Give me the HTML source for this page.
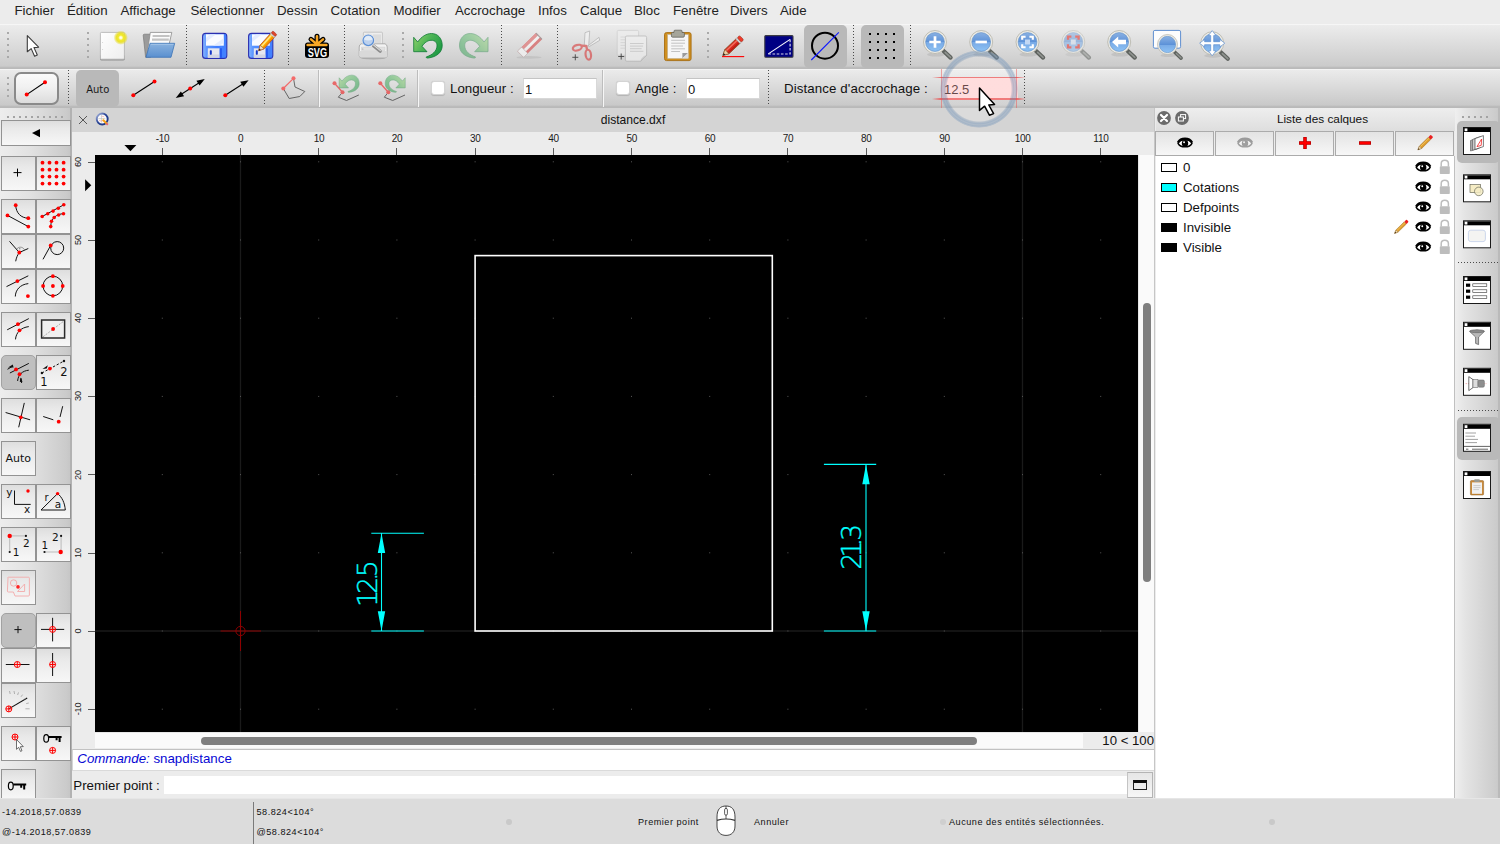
<!DOCTYPE html>
<html lang="fr"><head><meta charset="utf-8"><title>distance.dxf</title>
<style>
*{box-sizing:border-box;margin:0;padding:0}
html,body{width:1500px;height:844px;overflow:hidden;background:#ececec;font-family:"Liberation Sans",sans-serif;color:#000}
#app{position:absolute;left:0;top:0;width:1500px;height:844px;overflow:hidden}
.abs,#app div,#app span,#app svg{position:absolute}
svg{overflow:visible}
#menubar{left:0;top:0;width:1500px;height:24px;background:#ececec}
#menubar span{top:2px;font-size:13.3px;line-height:18px;color:#222;white-space:nowrap}
#tb1{left:0;top:24px;width:1500px;height:45px;background:linear-gradient(#f6f6f6 0,#f6f6f6 1px,#ececec 1px,#cbcbcb 42px,#bcbcbc 43.5px,#b9b9b9 45px)}
#tb2{left:0;top:69px;width:1500px;height:39px;background:linear-gradient(#f4f4f4 0,#f4f4f4 1px,#ebebeb 1px,#c9c9c9 36px,#bbbbbb 37.5px,#b8b8b8 39px)}
.vdots{width:2px;background:repeating-linear-gradient(#a9a9a9 0 2px,transparent 2px 6px)}
.hdots{height:2px;background:repeating-linear-gradient(90deg,#a3a3a3 0 2px,transparent 2px 6px)}
.dsep{width:1px;background:repeating-linear-gradient(#4a4a4a 0 1px,transparent 1px 3px)}
.hsep{height:1px;background:repeating-linear-gradient(90deg,#4a4a4a 0 1px,transparent 1px 3px)}
.ssep{width:2px;background:linear-gradient(90deg,#bdbdbd 0 1px,#f6f6f6 1px 2px)}
.pressed{background:#b9b9b9;border-radius:5px}
.lbl{font-size:13.3px;line-height:16px;white-space:nowrap;color:#111}
.cb{width:13.5px;height:13.5px;background:#fff;border:1px solid #d4d4d4;border-radius:3px;box-shadow:0 0.5px 1px rgba(0,0,0,.15)}
.inp{background:#fff;border:1px solid #d8d8d8;border-top-color:#c4c4c4;font-size:13px;line-height:20.5px;padding-left:.5px;color:#111}
#lefttb{left:0;top:108px;width:72px;height:690px;background:linear-gradient(90deg,#ededed 0,#e2e2e2 30px,#cbcbcb 66px,#c6c6c6 70.5px,#b2b2b2 70.5px,#b2b2b2 72px)}
.tbtn{width:35px;height:35px;border:1px solid #939393;background:linear-gradient(#dedede 0,#e9e9e9 30%,#f7f7f7 100%)}
.tbtn.on{background:#bfbfbf;border-radius:5px;border-color:#a2a2a2}
.dj{font-family:"DejaVu Sans",sans-serif}
#tabbar{left:72px;top:108px;width:1083px;height:24px;background:#d4d4d4}
#rulerarea{left:72px;top:132px;width:1083px;height:616px;background:#ececec}
#canvas{left:95px;top:155px;width:1043px;height:577px;background:#000;overflow:hidden}
.rl{font-size:10px;letter-spacing:-.3px;line-height:10px;color:#1a1a1a;white-space:nowrap;text-align:center;width:30px}
#rightpanel{left:1155px;top:108px;width:300px;height:690px;background:#ececec}
#righttb{left:1455px;top:108px;width:45px;height:690px;background:linear-gradient(90deg,#efefef 0,#e4e4e4 10px,#cbcbcb 42px,#c9c9c9 43px,#bababa 43px,#bababa 45px)}
#status{left:0;top:798px;width:1500px;height:46px;background:#dcdcdc}
#status span{font-size:9.1px;letter-spacing:.52px;line-height:12px;color:#111;white-space:nowrap}
.lrow{font-size:13.3px;line-height:16px;color:#111;white-space:nowrap}
.pbtn{width:59px;height:25px;top:23px;border:1px solid #ababab;background:linear-gradient(#e3e3e3,#f7f7f7)}
</style></head><body>
<div id="app">
<div id="menubar">
<span style="left:14.5px">Fichier</span><span style="left:67px">Édition</span><span style="left:120.5px">Affichage</span><span style="left:190.5px">Sélectionner</span><span style="left:277px">Dessin</span><span style="left:330.5px">Cotation</span><span style="left:393.5px">Modifier</span><span style="left:455px">Accrochage</span><span style="left:538px">Infos</span><span style="left:580px">Calque</span><span style="left:634px">Bloc</span><span style="left:673px">Fenêtre</span><span style="left:730px">Divers</span><span style="left:780px">Aide</span>
</div>
<div id="tb1">
<!-- coordinates inside tb1: y = pageY-24 -->
<div class="vdots" style="left:7px;top:8px;height:26px"></div>
<div class="vdots" style="left:87px;top:8px;height:26px"></div>
<div class="vdots" style="left:402px;top:8px;height:26px"></div>
<div class="vdots" style="left:707px;top:8px;height:26px"></div>
<div class="dsep" style="left:186px;top:1px;height:41px"></div>
<div class="dsep" style="left:288px;top:1px;height:41px"></div>
<div class="dsep" style="left:344px;top:1px;height:41px"></div>
<div class="dsep" style="left:501px;top:1px;height:41px"></div>
<div class="dsep" style="left:557px;top:1px;height:41px"></div>
<div class="dsep" style="left:853px;top:1px;height:41px"></div>
<div class="dsep" style="left:910px;top:1px;height:41px"></div>
<div class="pressed" style="left:804px;top:1px;width:43px;height:43px"></div>
<div class="pressed" style="left:861px;top:1px;width:43px;height:43px"></div>
<svg id="tb1svg" style="left:0;top:0" width="1500" height="45" viewBox="0 24 1500 45">
<defs>
<linearGradient id="gBlue" x1="0" y1="0" x2="0" y2="1"><stop offset="0" stop-color="#8ab1e3"/><stop offset=".5" stop-color="#5d92d8"/><stop offset=".52" stop-color="#78aae6"/><stop offset="1" stop-color="#8ec2f4"/></linearGradient>
<linearGradient id="gPage" x1="0" y1="0" x2="1" y2="1"><stop offset="0" stop-color="#fff"/><stop offset="1" stop-color="#eeeeee"/></linearGradient>
<linearGradient id="gFold" x1="0" y1="0" x2="0" y2="1"><stop offset="0" stop-color="#8ab3df"/><stop offset="1" stop-color="#5a8fcf"/></linearGradient>
<linearGradient id="gFlop" x1="0" y1="0" x2="1" y2="0"><stop offset="0" stop-color="#8ab8ff"/><stop offset=".18" stop-color="#5b95ff"/><stop offset=".6" stop-color="#3f7cff"/><stop offset="1" stop-color="#4f8cff"/></linearGradient>
<linearGradient id="gGreen" x1="0" y1="0" x2="1" y2=".6"><stop offset="0" stop-color="#96d46c"/><stop offset=".5" stop-color="#4cb456"/><stop offset="1" stop-color="#1f9a44"/></linearGradient>
<radialGradient id="gGlow"><stop offset="0" stop-color="#ffffff"/><stop offset=".16" stop-color="#fffbd0"/><stop offset=".36" stop-color="#f2ea2c"/><stop offset=".62" stop-color="#ebe126" stop-opacity=".95"/><stop offset=".85" stop-color="#e6dc30" stop-opacity=".45"/><stop offset="1" stop-color="#e6dc30" stop-opacity="0"/></radialGradient>
<g id="mag">
<ellipse cx="1" cy="12.5" rx="9" ry="2" fill="#777" opacity=".18"/>
<path d="M7.5 8 L15.6 15.6" stroke="#5f635f" stroke-width="4.2" stroke-linecap="round"/>
<path d="M10.2 10.4 L15.6 15.4" stroke="#8f938f" stroke-width="1.6" stroke-linecap="round"/>
<circle r="11.5" fill="#ecebe5" stroke="#b4b2a8" stroke-width=".8"/>
<circle r="9.4" fill="url(#gBlue)" stroke="#5f8fc6" stroke-width=".6"/>
</g>
</defs>
<!-- arrow cursor -->
<path d="M27.3 35.6 L27.3 51.8 L31.2 48.6 L34.6 56.2 L37.3 55 L34 47.6 L38.6 47.2 Z" fill="#fff" stroke="#3c3c3c" stroke-width="1.1" stroke-linejoin="round"/>
<!-- new doc -->
<rect x="100" y="55" width="24.8" height="5.5" rx="1.4" fill="#868686" opacity=".85"/>
<rect x="100.4" y="32.4" width="24" height="26.8" rx="1" fill="url(#gPage)" stroke="#b0b0b0" stroke-width=".8"/>
<circle cx="102.6" cy="42.4" r=".5" fill="#ccc"/><circle cx="102.6" cy="49.6" r=".5" fill="#ccc"/>
<circle cx="120.8" cy="37.7" r="7.2" fill="url(#gGlow)"/>
<!-- open folder -->
<path d="M143.2 35.4 Q143.2 34.2 144.4 34.2 L150.5 34.2 L150.5 57.3 L145.6 57.3 Z" fill="#9b9b9b" stroke="#6f6f6f" stroke-width=".6"/>
<path d="M150.3 32.4 L171.8 32.4 L169.2 44 L146.8 56 Z" fill="#fbfbfb" stroke="#8a8a8a" stroke-width=".8" stroke-linejoin="round"/>
<path d="M152.6 36 L169.6 36 M152 39.6 L168.8 39.6" stroke="#c3c3c3" stroke-width="2.2"/>
<path d="M150 43.3 L174.7 43.3 L171 57.3 L146 57.3 Z" fill="url(#gFold)" stroke="#3b74b8" stroke-width=".8" stroke-linejoin="round"/>
<path d="M150.8 44.4 L173.4 44.4" stroke="#a9c8ea" stroke-width=".8"/>
<!-- save -->
<g id="flop"><rect x="202.6" y="33.4" width="24.2" height="25" rx="3" fill="url(#gFlop)" stroke="#2a2fb0" stroke-width="1.1"/>
<rect x="222.2" y="34" width="4" height="23.8" fill="#3d7dff" opacity=".6"/>
<path d="M206 34.3 H223.8 V45.7 H206 Z" fill="#fafbff"/><path d="M210 34.3 H216 L206 42 V38 Z M223.8 38 V43 L219 45.7 H213 Z" fill="#dfe8ff" opacity=".8"/>
<rect x="207.8" y="48.3" width="11.9" height="9.4" fill="#e6e7f0"/><rect x="207.8" y="54.5" width="11.9" height="3.2" fill="#d2d4e2"/><rect x="219.7" y="48.3" width="2.2" height="9.4" fill="#2559f0"/><rect x="209.8" y="50.3" width="2" height="4.4" rx=".6" fill="#1536c8"/></g>
<!-- save as -->
<use href="#flop" x="46"/>
<g transform="translate(258.7 50.7) rotate(-47.9)"><path d="M0 0 L5 -2.7 L21 -2.7 L21 2.7 L5 2.7 Z" fill="#ffb000" stroke="#b0401a" stroke-width=".7" stroke-linejoin="round"/><path d="M5 -0.9 H21" stroke="#ffe88a" stroke-width="1.5"/><path d="M5 1.6 H21" stroke="#f08a00" stroke-width="1.2"/><path d="M0 0 L5 -2.7 L5 2.7 Z" fill="#f3dcb8" stroke="#8a4a2a" stroke-width=".5"/><path d="M0 0 L2 -1.1 L2 1.1 Z" fill="#222"/><rect x="20" y="-2.8" width="1.6" height="5.6" fill="#d8d8d8" stroke="#999" stroke-width=".3"/><rect x="21.6" y="-2.8" width="2.6" height="5.6" rx="1.1" fill="#e0442a" stroke="#a02a14" stroke-width=".5"/></g>
<!-- SVG icon -->
<g stroke="#000" stroke-width="5" stroke-linecap="round"><path d="M317 44.4 V36.2 M317 44.4 L311 39.4 M317 44.4 L323 39.4 M307.6 45 H326.4"/></g>
<rect x="305" y="43.6" width="24" height="14.4" rx="3" fill="#000"/>
<g stroke="#f9a825" stroke-width="2.5" stroke-linecap="round"><path d="M317 44.4 V36.2 M317 44.4 L311 39.4 M317 44.4 L323 39.4 M307.6 45 H326.4"/></g>
<circle cx="317" cy="43.6" r="2.2" fill="#f9a825"/>
<text x="317.4" y="57" font-family="Liberation Sans,sans-serif" font-weight="bold" font-size="12.8" fill="#fff" text-anchor="middle" textLength="19.4" lengthAdjust="spacingAndGlyphs">SVG</text>
<!-- print preview -->
<ellipse cx="373.2" cy="57.8" rx="13" ry="1.6" fill="#8a8a8a" opacity=".5"/>
<rect x="363.4" y="32.2" width="19" height="14" rx=".8" fill="#eeeeee" stroke="#bdbdbd" stroke-width=".8"/>
<rect x="373" y="34.4" width="8" height="8.6" fill="#dcdcdc"/>
<path d="M361.2 43.8 L385 43.8 Q387.2 44.6 387.2 47 L387.2 55.6 Q387.2 57.6 385.2 57.6 L361.2 57.6 Q359.2 57.6 359.2 55.6 L359.2 47 Q359.2 44.6 361.2 43.8 Z" fill="#f3f3f3" stroke="#a6a6a6" stroke-width=".9"/>
<path d="M359.2 51 H387.2 V55.6 Q387.2 57.6 385.2 57.6 H361.2 Q359.2 57.6 359.2 55.6 Z" fill="#d9d9d9"/>
<path d="M361.5 47.2 H385 V50.4 H361.5 Z" fill="#e2e2e2" stroke="#c9c9c9" stroke-width=".5"/>
<circle cx="362.8" cy="49" r=".5" fill="#888"/>
<path d="M373.2 45.4 L380.2 51.2" stroke="#8c8c8c" stroke-width="3.2" stroke-linecap="round"/><path d="M373.6 45 L380.4 50.6" stroke="#dcdcdc" stroke-width="1.1" stroke-linecap="round"/>
<circle cx="368.3" cy="40.3" r="6.5" fill="#f2f2f2" stroke="#d6d6d6" stroke-width=".5"/>
<circle cx="368.3" cy="40.3" r="5.3" fill="#bcd1ee" stroke="#5b8fd6" stroke-width="1.2"/><path d="M364 39.4 A4.4 4.4 0 0 1 372.6 39.4 Q368.3 41.4 364 39.4 Z" fill="#e2ecf8"/>
<!-- undo -->
<path id="undo" d="M413.7 37.3 L413.7 51.7 L427 51.7 L422 46.3 C424.5 42.5 428 40.3 431 40.3 C435 40.3 437.2 42.5 437 46 C436.8 51 432.5 55 426.3 56.9 C426 57.6 426.6 58.2 428 58 C437 57 442.5 52 442.2 45 C442 38 437.5 33.5 431.5 33.5 C426.5 33.5 421.5 36.5 417.7 42 Z" fill="url(#gGreen)" stroke="#0f7a35" stroke-width=".8" stroke-linejoin="round"/>
<!-- redo (faded) -->
<g transform="translate(901.7 0) scale(-1 1)" opacity=".45"><use href="#undo"/></g>
<!-- eraser faded -->
<g opacity=".62"><ellipse cx="529" cy="57.4" rx="12.5" ry="1.3" fill="#aaa" opacity=".6"/><g transform="translate(520.5 54.3) rotate(-44.4)"><rect x="0" y="-4.4" width="26.3" height="8.8" rx="1" fill="#d64a4a"/><rect x="0" y="-4.4" width="26.3" height="3.2" fill="#e06868"/><rect x="5.8" y="-1.3" width="20.5" height="2.9" fill="#fafafa"/><rect x="0" y="-4.4" width="5.8" height="8.8" rx=".8" fill="#fbfbfb" stroke="#9a9a9a" stroke-width=".5"/><rect x="25.3" y="-4.4" width="1" height="8.8" fill="#777"/></g></g>
<!-- scissors faded -->
<g opacity=".6"><path d="M585 32.7 L589.7 31 L588.7 46 L584.3 45.3 Z" fill="#f6f6f6" stroke="#8f8f8f" stroke-width=".7" stroke-linejoin="round"/><path d="M588.3 45.6 L599 37.3 L599.7 40.3 L589.3 46.5 Z" fill="#f6f6f6" stroke="#8f8f8f" stroke-width=".7" stroke-linejoin="round"/>
<ellipse cx="577.3" cy="47.7" rx="4.6" ry="2.7" fill="none" stroke="#d83a3a" stroke-width="2.2" transform="rotate(-17 577.3 47.7)"/><ellipse cx="588.3" cy="54.7" rx="2.7" ry="5" fill="none" stroke="#d83a3a" stroke-width="2.2" transform="rotate(-8 588.3 54.7)"/><path d="M581.6 45.6 L586.2 46 L587.2 50" fill="none" stroke="#d83a3a" stroke-width="2.4" stroke-linejoin="round"/>
</g><path d="M572.3 57.3 H578.3 M575.3 54.3 V60.3" stroke="#444" stroke-width=".9"/>
<!-- copy faded -->
<g opacity=".62"><path d="M617.2 31.6 Q617.2 30.4 618.4 30.4 H637.4 Q638.6 30.4 638.6 31.6 V55.2 H617.2 Z" fill="#efefef" stroke="#bdbdbd" stroke-width=".7"/>
<path d="M620.5 37 H626 M620.5 39.8 H625 M620.5 42.6 H625 M620.5 45.4 H625 M620.5 48.2 H625" stroke="#cdcdcd" stroke-width=".9"/>
<path d="M625.4 37.4 Q625.4 36 626.8 36 H645.2 Q646.6 36 646.6 37.4 V55.4 L640.8 61.2 H626.8 Q625.4 61.2 625.4 59.8 Z" fill="#f3f3f3" stroke="#a2a2a2" stroke-width=".8"/><path d="M640.8 61.2 Q641.6 57 646.6 55.4 Z" fill="#d2d2d2" stroke="#a2a2a2" stroke-width=".5"/>
<path d="M630 43.5 H643.6 M630 46.1 H643 M630 48.7 H641.6 M630 51.3 H643.4" stroke="#bdbdbd" stroke-width=".9"/></g>
<path d="M618.2 56.5 H624.2 M621.2 53.5 V59.5" stroke="#444" stroke-width=".9"/>
<!-- paste -->
<rect x="664.5" y="32.6" width="26.6" height="28" rx="2" fill="#cf8f1f" stroke="#a76d12" stroke-width=".9"/>
<rect x="667.7" y="34.6" width="20.6" height="23.8" fill="#f6f6f6" stroke="#b9b9b9" stroke-width=".4"/>
<path d="M671.4 33.4 Q671.4 32.4 672.6 32.4 H674 V31 Q674 30.2 675 30.2 H681 Q682 30.2 682 31 V32.4 H683.2 Q684.4 32.4 684.4 33.4 V36 Q684.4 37.2 683.2 37.2 H672.6 Q671.4 37.2 671.4 36 Z" fill="#a5a59a" stroke="#5c5c56" stroke-width=".7"/>
<path d="M671.2 40.3 H685 M671.2 43.2 H685 M671.2 46 H683 M671.2 48.8 H685 M671.2 51.5 H680" stroke="#bcbcbc" stroke-width=".9"/>
<path d="M682.4 58.3 V53 H688.2 Z" fill="#9b9b9b"/><path d="M682.4 58.3 L688.2 53 V58.3 Z" fill="#dedede"/>
<!-- red pencil -->
<path d="M722 56.6 H744.2" stroke="#f00" stroke-width="1.1"/>
<g transform="translate(722.9 55.4) rotate(-43.4) scale(.93)"><path d="M0 0 L6 -3.2 L22.5 -3.2 L22.5 3.2 L6 3.2 Z" fill="#d8281e" stroke="#7a4a20" stroke-width=".7" stroke-linejoin="round"/><path d="M6 -1.2 H22.5" stroke="#f2705e" stroke-width="1.5"/><path d="M6 1.9 H22.5" stroke="#b81c14" stroke-width="1.2"/><path d="M0 0 L6 -3.2 L6 3.2 Z" fill="#ecd0a4" stroke="#7a4a20" stroke-width=".6" stroke-linejoin="round"/><path d="M0 0 L2.3 -1.25 L2.3 1.25 Z" fill="#1a1a1a"/><rect x="22" y="-3.3" width="2.2" height="6.6" fill="#d9d9d9" stroke="#8a8a8a" stroke-width=".4"/><rect x="24.2" y="-3.3" width="3.6" height="6.6" rx="1.5" fill="#ee3a2a" stroke="#8a2a18" stroke-width=".5"/></g>
<!-- navy draft icon -->
<rect x="764.8" y="35.6" width="28.2" height="21.6" rx="1" fill="#000083" stroke="#3c3c44" stroke-width="1.1"/>
<path d="M768.3 53.9 L790.1 39.4" stroke="#fff" stroke-width="1.1"/><path d="M768.3 54 H790.1 V39.4" fill="none" stroke="#d6d6ea" stroke-width="1.2" stroke-dasharray="2.6 1.6"/>
<!-- circle with line -->
<circle cx="825" cy="45.7" r="13" fill="none" stroke="#000" stroke-width="2"/>
<path d="M811.3 60 L838.8 32.4" stroke="#0a14ff" stroke-width="1.1"/>
<!-- grid -->
<g fill="#000"><rect x="869" y="33" width="2" height="2"/><rect x="877" y="33" width="2" height="2"/><rect x="885" y="33" width="2" height="2"/><rect x="893" y="33" width="2" height="2"/>
<rect x="869" y="41" width="2" height="2"/><rect x="877" y="41" width="2" height="2"/><rect x="885" y="41" width="2" height="2"/><rect x="893" y="41" width="2" height="2"/>
<rect x="869" y="49" width="2" height="2"/><rect x="877" y="49" width="2" height="2"/><rect x="885" y="49" width="2" height="2"/><rect x="893" y="49" width="2" height="2"/>
<rect x="869" y="57" width="2" height="2"/><rect x="877" y="57" width="2" height="2"/><rect x="885" y="57" width="2" height="2"/><rect x="893" y="57" width="2" height="2"/></g>
<!-- magnifiers -->
<use href="#mag" x="935" y="42"/><path d="M929.3 42 H940.7 M935 36.3 V47.7" stroke="#fff" stroke-width="2.7"/>
<use href="#mag" x="981.2" y="42"/><path d="M975.5 42 H986.9" stroke="#fff" stroke-width="2.7"/>
<use href="#mag" x="1027.5" y="42"/><rect x="1025" y="39.5" width="5" height="5" fill="#c2d8f4"/><path d="M1022.2 39.8 V36.7 H1025.6 M1029.4 36.7 H1032.8 V39.8 M1032.8 44.2 V47.3 H1029.4 M1025.6 47.3 H1022.2 V44.2" fill="none" stroke="#fff" stroke-width="2.1"/>
<g opacity=".55"><use href="#mag" x="1073.3" y="42"/><rect x="1070.8" y="39.5" width="5" height="5" fill="#d5e2f4"/><path d="M1068 39.8 V36.7 H1071.4 M1075.2 36.7 H1078.6 V39.8 M1078.6 44.2 V47.3 H1075.2 M1071.4 47.3 H1068 V44.2" fill="none" stroke="#e8231a" stroke-width="2.3"/></g>
<use href="#mag" x="1119.2" y="42"/><path d="M1112 42 L1118.2 36.6 V39.8 H1126 V44.2 H1118.2 V47.4 Z" fill="#fff"/>
<rect x="1153.4" y="30.4" width="27.2" height="17.8" rx="1.5" fill="#fdfdfd" stroke="#5f8fd0" stroke-width="1"/>
<g transform="translate(1167.5 44.5) scale(.87)"><use href="#mag"/></g>
<use href="#mag" x="1212.2" y="43.2"/><path d="M1212.2 30.6 L1216 35.6 H1213.7 V41.7 H1219.8 V39.4 L1224.8 43.2 L1219.8 47 V44.7 H1213.7 V50.8 H1216 L1212.2 55.8 L1208.4 50.8 H1210.7 V44.7 H1204.6 V47 L1199.6 43.2 L1204.6 39.4 V41.7 H1210.7 V35.6 H1208.4 Z" fill="#fff" stroke="#5f8fd0" stroke-width=".7" stroke-linejoin="round"/>
</svg>
</div>
<div id="tb2">
<!-- inside tb2: y = pageY-69 -->
<div class="vdots" style="left:7px;top:8px;height:20px"></div>
<div style="left:14px;top:3px;width:45px;height:33px;border:2px solid #8a8a8a;border-radius:7px;background:linear-gradient(#fafafa,#f1f1f1 45%,#dcdcdc)"></div>
<div class="dsep" style="left:68px;top:1px;height:36px"></div>
<div class="pressed" style="left:76px;top:1px;width:43px;height:37px"></div>
<span class="dj" style="left:86.2px;top:13.5px;font-size:10px;line-height:13px;color:#1a1a1a">Auto</span>
<div class="dsep" style="left:264px;top:1px;height:36px"></div>
<div class="ssep" style="left:318px;top:1px;height:37px"></div>
<div class="ssep" style="left:417px;top:1px;height:37px"></div>
<div class="cb" style="left:431px;top:12px"></div>
<span class="lbl" style="left:450px;top:12px">Longueur :</span>
<div class="inp" style="left:523.4px;top:9px;width:74px;height:21px;padding-top:1px">1</div>
<div class="ssep" style="left:602px;top:1px;height:37px"></div>
<div class="cb" style="left:616px;top:12px"></div>
<span class="lbl" style="left:635px;top:12px">Angle :</span>
<div class="inp" style="left:686.4px;top:9px;width:74px;height:21px;padding-top:1px">0</div>
<div class="dsep" style="left:768px;top:1px;height:36px"></div>
<span class="lbl" style="left:784px;top:12px;letter-spacing:.1px">Distance d'accrochage :</span>
<div style="left:941.5px;top:8.5px;width:76px;height:22px;background:#ffd6d6"></div>
<div style="left:932px;top:8px;width:94px;height:1.3px;background:linear-gradient(90deg,rgba(235,85,85,0),rgba(235,85,85,.9) 10%,rgba(235,85,85,.9) 90%,rgba(235,85,85,0))"></div>
<div style="left:932px;top:29.4px;width:94px;height:1.3px;background:linear-gradient(90deg,rgba(235,85,85,0),rgba(235,85,85,.9) 10%,rgba(235,85,85,.9) 90%,rgba(235,85,85,0))"></div>
<div style="left:941px;top:0;width:1.1px;height:39px;background:rgba(235,85,85,.5)"></div>
<div style="left:1016.4px;top:0;width:1.1px;height:39px;background:rgba(235,85,85,.5)"></div>
<span class="lbl" style="left:944px;top:12.5px;color:#4a2424;font-size:13px">12.5</span>
<div class="dsep" style="left:1024px;top:1px;height:36px"></div>
<svg style="left:0;top:0" width="1500" height="39" viewBox="0 69 1500 39">
<!-- line tool in button -->
<path d="M26.7 94.6 L45 82.3" stroke="#000" stroke-width="1.1"/><circle cx="26.7" cy="94.6" r="2" fill="#f00"/><circle cx="45" cy="82.3" r="2" fill="#f00"/>
<!-- line 2pt -->
<path d="M133.3 95.3 L154.5 81.5" stroke="#000" stroke-width="1.1"/><circle cx="133.3" cy="95.3" r="2" fill="#f00"/><circle cx="154.5" cy="81.5" r="2" fill="#f00"/>
<!-- double arrow -->
<path d="M179 95.8 L201.5 81.2" stroke="#000" stroke-width="1.1"/><path d="M204.8 79.1 L196.4 80.7 L199.6 85.6 Z M175.7 97.9 L184.1 96.3 L180.9 91.4 Z" fill="#000"/><circle cx="190.2" cy="88.6" r="2" fill="#f00"/>
<!-- single arrow -->
<path d="M225.3 95.3 L245 82.5" stroke="#000" stroke-width="1.1"/><path d="M248.6 80.2 L240.2 81.8 L243.4 86.7 Z" fill="#000"/><circle cx="225.3" cy="95.3" r="2" fill="#f00"/>
<!-- polygon faded -->
<g opacity=".62"><path d="M293.5 78.3 L295 87 L304.8 91.5 L299.8 96.5 L289.2 98.5 L283.3 88.5" fill="none" stroke="#222" stroke-width="1"/><path d="M283.3 88.5 L293.5 78.3" stroke="#f22" stroke-width="1.2"/><circle cx="293.5" cy="78.3" r="2" fill="#f22"/><circle cx="283.3" cy="88.5" r="2" fill="#f22"/></g>
<!-- undo seg faded -->
<g opacity=".5" transform="translate(49.6 51.7) scale(.7)"><use href="#undo"/></g>
<g opacity=".62"><path d="M342.5 92.3 L338.3 97.2 L346.5 100.5 L358.8 95" fill="none" stroke="#222" stroke-width="1"/><path d="M334.5 83.3 L342.5 92.3" stroke="#e22" stroke-width="1.3"/><circle cx="334.5" cy="83.3" r="2" fill="#e22"/><circle cx="342.5" cy="92.3" r="2" fill="#e22"/></g>
<g opacity=".5" transform="translate(694.8 51.7) scale(-.7 .7)"><use href="#undo"/></g>
<g opacity=".62"><path d="M388.3 92.3 L384.3 97.2 L392.7 100.5 L405 95" fill="none" stroke="#222" stroke-width="1"/><path d="M380.3 83.3 L388.3 92.3" stroke="#e22" stroke-width="1.3"/><circle cx="380.3" cy="83.3" r="2" fill="#e22"/><circle cx="388.3" cy="92.3" r="2" fill="#e22"/></g>
</svg>
</div>
<div id="lefttb">
<div class="hdots" style="left:7px;top:8px;width:56px"></div>
<div class="tbtn" style="left:1px;top:12px;width:70px;height:26px"></div>
<div class="tbtn" style="left:1px;top:48px"></div><div class="tbtn" style="left:36px;top:48px"></div>
<div class="tbtn" style="left:1px;top:91px"></div><div class="tbtn" style="left:36px;top:91px"></div>
<div class="tbtn" style="left:1px;top:126px"></div><div class="tbtn" style="left:36px;top:126px"></div>
<div class="tbtn" style="left:1px;top:161px"></div><div class="tbtn" style="left:36px;top:161px"></div>
<div class="tbtn" style="left:1px;top:204px"></div><div class="tbtn" style="left:36px;top:204px"></div>
<div class="tbtn on" style="left:1px;top:247px"></div><div class="tbtn" style="left:36px;top:247px"></div>
<div class="tbtn" style="left:1px;top:290px"></div><div class="tbtn" style="left:36px;top:290px"></div>
<div class="tbtn" style="left:1px;top:333px"></div>
<div class="tbtn" style="left:1px;top:376px"></div><div class="tbtn" style="left:36px;top:376px"></div>
<div class="tbtn" style="left:1px;top:419px"></div><div class="tbtn" style="left:36px;top:419px"></div>
<div class="tbtn" style="left:1px;top:462px"></div>
<div class="tbtn on" style="left:1px;top:505px"></div><div class="tbtn" style="left:36px;top:505px"></div>
<div class="tbtn" style="left:1px;top:540px"></div><div class="tbtn" style="left:36px;top:540px"></div>
<div class="tbtn" style="left:1px;top:575px"></div>
<div class="tbtn" style="left:1px;top:618px"></div><div class="tbtn" style="left:36px;top:618px"></div>
<div class="tbtn" style="left:1px;top:661px;height:30px;border-bottom:none"></div>
<span class="dj" style="left:5.5px;top:343.5px;font-size:11px;line-height:14px;color:#111">Auto</span>
<svg style="left:0;top:0" width="72" height="690" viewBox="0 108 72 690" font-family="DejaVu Sans,sans-serif" fill="#111">
<defs><g id="rc"><circle r="3" fill="none" stroke="#f00" stroke-width="1"/><path d="M-3 0 H3 M0 -3 V3" stroke="#f00" stroke-width="1"/></g></defs>
<path d="M40 129 V137.2 L32 133.1 Z" fill="#000"/>
<path d="M13.5 172.6 H21.5 M17.5 168.6 V176.6" stroke="#000" stroke-width="1"/>
<g fill="#f00"><circle cx="42.5" cy="162.7" r="1.9"/><circle cx="49.5" cy="162.7" r="1.9"/><circle cx="56.5" cy="162.7" r="1.9"/><circle cx="63.6" cy="162.7" r="1.9"/>
<circle cx="42.5" cy="169.7" r="1.9"/><circle cx="49.5" cy="169.7" r="1.9"/><circle cx="56.5" cy="169.7" r="1.9"/><circle cx="63.6" cy="169.7" r="1.9"/>
<circle cx="42.5" cy="176.6" r="1.9"/><circle cx="49.5" cy="176.6" r="1.9"/><circle cx="56.5" cy="176.6" r="1.9"/><circle cx="63.6" cy="176.6" r="1.9"/>
<circle cx="42.5" cy="183.6" r="1.9"/><circle cx="49.5" cy="183.6" r="1.9"/><circle cx="56.5" cy="183.6" r="1.9"/><circle cx="63.6" cy="183.6" r="1.9"/></g>
<!-- row C -->
<g fill="none" stroke="#111" stroke-width="1"><path d="M15.7 205.2 C16 213 21 218 28.3 218.2"/><path d="M7.5 215.4 L28.3 226.6"/>
<path d="M42.2 216.5 L63.8 204.8"/><path d="M50.7 226.6 C51 217.5 57 214 63.5 213.7"/></g>
<g fill="#f00"><circle cx="15.7" cy="205.2" r="1.9"/><circle cx="7.5" cy="215.4" r="1.9"/><circle cx="28.3" cy="218.2" r="1.9"/><circle cx="28.3" cy="226.6" r="1.9"/>
<circle cx="42.2" cy="216.5" r="1.8"/><circle cx="47.7" cy="213.8" r="1.8"/><circle cx="53.1" cy="211.1" r="1.8"/><circle cx="58.3" cy="208.2" r="1.8"/><circle cx="63.8" cy="204.8" r="1.8"/>
<circle cx="50.7" cy="226.6" r="1.8"/><circle cx="51.5" cy="221.3" r="1.8"/><circle cx="54.2" cy="217.5" r="1.8"/><circle cx="58.6" cy="215" r="1.8"/><circle cx="63.5" cy="213.7" r="1.8"/></g>
<!-- row D -->
<g fill="none" stroke="#111" stroke-width="1"><path d="M9.5 241.3 L19.3 252.5 L28.3 248.5"/><path d="M19.3 252.5 C17.5 255 16.2 258 15.7 261.3"/><path d="M16.6 249.2 C18.5 246.5 22.5 246.3 24.6 249.8" stroke="#555" stroke-width=".6"/>
<path d="M43 259.3 L50.7 245.4"/><circle cx="57.2" cy="248.1" r="6.5"/></g>
<circle cx="19.8" cy="248.8" r=".5"/><circle cx="19.3" cy="252.5" r="1.9" fill="#f00"/><circle cx="50.7" cy="245.4" r="1.9" fill="#f00"/>
<!-- row E -->
<g fill="none" stroke="#111" stroke-width="1"><path d="M6.5 286.6 L28.3 275.8"/><path d="M28.3 283.6 C20 284.5 15.5 290 15.3 296.5"/><circle cx="52.9" cy="286" r="9.8"/></g>
<g fill="#f00"><circle cx="17.4" cy="281.1" r="1.9"/><circle cx="27.9" cy="296.1" r="1.9"/><circle cx="52.9" cy="286" r="1.9"/><circle cx="52.9" cy="276.2" r="1.9"/><circle cx="52.9" cy="295.8" r="1.9"/><circle cx="43.1" cy="286" r="1.9"/><circle cx="62.7" cy="286" r="1.9"/></g>
<!-- row F -->
<g fill="none" stroke="#111" stroke-width="1"><path d="M7.2 329.8 L28.8 318.6"/><path d="M28.8 326.6 C21 327.5 16 332.5 15.5 339.4"/></g>
<rect x="41.6" y="320" width="23" height="18" fill="#efefef" stroke="#2a2a2a" stroke-width="1.5"/><path d="M43 336.8 L63.4 321.4" stroke="#888" stroke-width=".7" stroke-dasharray="2 1.3"/>
<g fill="#f00"><circle cx="17.9" cy="324.2" r="1.9"/><circle cx="19.5" cy="330.3" r="1.9"/><circle cx="53.1" cy="329" r="1.9"/></g>
<!-- row G -->
<g fill="none" stroke="#111" stroke-width="1"><path d="M9.9 373 L28.8 363.4"/><path d="M28.8 370.2 C22.5 370.8 18.2 374.5 17.6 381"/></g>
<path d="M8 367.6 L12.8 364.6 L13.6 367.4 Z M20.3 377.5 L22.6 381.8 L19.8 382 Z" fill="#111"/><path d="M7.5 369.3 L12 366.6 M21.6 383 L21.2 378.2" stroke="#111" stroke-width="1"/>
<g fill="#f00"><circle cx="16" cy="369.4" r="1.9"/><circle cx="19.5" cy="374.2" r="1.9"/></g>
<path d="M41.9 373 L64 361" stroke="#111" stroke-width="1" stroke-dasharray="2.4 1.8"/><circle cx="41.9" cy="373" r="1.2"/><circle cx="64" cy="361" r="1.2"/><path d="M42.5 369 L47.8 365.2 L46.8 368.6 Z" fill="#111"/>
<circle cx="49.9" cy="368.6" r="1.9" fill="#f00"/>
<text x="40.2" y="385.8" font-size="11.5">1</text><text x="60.2" y="376.2" font-size="11.5">2</text>
<!-- row H -->
<g stroke="#111" stroke-width="1"><path d="M5.6 412.5 L30.1 419.8 M24.3 402.9 L18.7 427.3 M43.2 416.5 L53.3 419.8 M62.7 406.2 L60 417"/></g>
<circle cx="20.8" cy="417.3" r="1.9" fill="#f00"/><circle cx="58.7" cy="421.7" r="1.9" fill="#f00"/>
<!-- row J -->
<path d="M14.5 490.5 V504.4 H30.7" fill="none" stroke="#111" stroke-width="1"/><circle cx="28" cy="491" r="1.7" fill="#f00"/>
<text x="6.3" y="496.2" font-size="10.5">y</text><text x="24" y="513" font-size="10.5">x</text>
<path d="M41 510 L57.6 493.6 C62 497 64.8 503 65.3 510 Z" fill="none" stroke="#111" stroke-width="1"/><circle cx="57.6" cy="493.6" r="1.7" fill="#f00"/>
<text x="44.6" y="500.6" font-size="10">r</text><text x="54.8" y="507.6" font-size="10.5">a</text>
<!-- row K -->
<path d="M9.7 535.9 H25.9 M9.7 535.9 V552" stroke="#999" stroke-width=".6"/><circle cx="9.7" cy="535.9" r="2.2" fill="#f00"/><circle cx="25.9" cy="535.9" r="1.1"/><circle cx="9.7" cy="552" r="1.1"/>
<text x="23" y="547.2" font-size="10.5">2</text><text x="12.8" y="555.6" font-size="10.5">1</text>
<path d="M44.5 552 H60.7 M61.1 535.9 V552" stroke="#999" stroke-width=".6"/><circle cx="60.7" cy="552" r="2.2" fill="#f00"/><circle cx="61.1" cy="535.9" r="1.1"/><circle cx="44.5" cy="552" r="1.1"/>
<text x="52" y="541.2" font-size="10.5">2</text><text x="41.6" y="549" font-size="10.5">1</text>
<!-- row L -->
<g fill="none" stroke="#f3a9a9" stroke-width=".9"><path d="M8 578 Q7.4 577.2 8.4 577.2 H28.4 Q29.4 577.2 29.4 578.2 V595 Q29.4 596 28.4 596 H15 L13.4 592 H8.4 Q7.4 592 7.4 591 Z"/><circle cx="13.6" cy="583" r="3.2"/><path d="M17.5 591.5 H24.6 V584 Z"/></g><circle cx="18" cy="586.9" r="1.8" fill="#f22"/>
<!-- row M -->
<path d="M14.4 629.6 H21.6 M18 626 V633.2" stroke="#111" stroke-width="1"/>
<path d="M41 629.4 H64.2 M52.6 617.8 V641.4" stroke="#111" stroke-width="1"/><use href="#rc" x="52.6" y="629.4"/>
<path d="M5.8 664.5 H29.5" stroke="#111" stroke-width="1"/><use href="#rc" x="17.3" y="664.5"/>
<path d="M52.6 653 V676" stroke="#111" stroke-width="1"/><use href="#rc" x="52.6" y="664.5"/>
<!-- row O -->
<path d="M8.8 708.9 L27.2 698" stroke="#111" stroke-width="1.1"/><use href="#rc" x="8.8" y="708.9"/>
<path d="M9.5 691 L10.2 694 M14 691 L14.6 694 M18.5 692.4 L17.6 695 M22.6 694.6 L21 696.8 M26.2 698 L24.2 699.4 M28.8 703 L26.2 703.6 M29.6 708.8 L25.4 708.8" stroke="#888" stroke-width=".6"/>
<!-- row P -->
<use href="#rc" x="15" y="737"/><path d="M16.5 739.5 L16.5 749.3 L18.7 747.3 L20.5 751.4 L22 750.7 L20.3 746.7 L23.3 746.6 Z" fill="#fff" stroke="#333" stroke-width=".7"/>
<g id="key"><ellipse cx="46.2" cy="738.4" rx="2.4" ry="3.8" fill="none" stroke="#000" stroke-width="1.2"/><path d="M48.6 737 H61.6 M59.6 737 V742 M56.6 737 V740.2" stroke="#000" stroke-width="2"/></g>
<use href="#rc" x="52.6" y="750.4"/>
<use href="#key" x="-35.4" y="47.6"/>
</svg>
</div>
<div id="tabbar">
<svg style="left:0;top:0" width="60" height="24" viewBox="72 108 60 24">
<path d="M79 116 L87 124 M87 116 L79 124" stroke="#565656" stroke-width="1"/>
<defs><linearGradient id="gQ" x1="0" y1="0" x2="1" y2="1"><stop offset="0" stop-color="#b4c0e2"/><stop offset=".45" stop-color="#2a4596"/><stop offset="1" stop-color="#1c3480"/></linearGradient></defs>
<circle cx="102.2" cy="119" r="5.5" fill="#fbfbfb" stroke="url(#gQ)" stroke-width="1.9"/>
<path d="M101.4 115 V122.6 M98.4 118.6 H105.4" stroke="#b9b9b9" stroke-width=".6"/><path d="M99 120.4 Q101 121.6 103 120.6 M101.8 116.4 Q103.2 116 104.2 117" stroke="#e88" stroke-width=".5" fill="none"/>
<path d="M102.4 119.2 L106.8 123.8" stroke="#f5a21a" stroke-width="2"/><path d="M102.2 119 L103 119.9" stroke="#f4e6c0" stroke-width="1.6"/><path d="M106.4 123.4 L107.8 124.8" stroke="#e8606a" stroke-width="2"/>
</svg>
<span style="left:0;top:4px;width:1122px;text-align:center;font-size:12.1px;line-height:16px;color:#111">distance.dxf</span>
</div>
<div id="rulerarea">
<svg style="left:0;top:0" width="1083" height="616" viewBox="72 132 1083 616">
<path d="M162.5 148 V155 M240.5 148 V155 M318.5 148 V155 M396.5 148 V155 M475.5 148 V155 M553.5 148 V155 M631.5 148 V155 M709.5 148 V155 M787.5 148 V155 M866.5 148 V155 M944.5 148 V155 M1022.5 148 V155 M1100.5 148 V155 M88 709.5 H95 M88 631.5 H95 M88 553.5 H95 M88 474.5 H95 M88 396.5 H95 M88 318.5 H95 M88 240.5 H95 M88 162.5 H95" stroke="#5a5a5a" stroke-width="1"/>
<path d="M124.4 145 H136.4 L130.4 151.2 Z" fill="#000"/>
<path d="M85.1 179.2 V191.2 L91.3 185.2 Z" fill="#000"/>
</svg>
<span class="rl" style="left:75.5px;top:2.2px">-10</span>
<span class="rl" style="left:153.7px;top:2.2px">0</span>
<span class="rl" style="left:231.9px;top:2.2px">10</span>
<span class="rl" style="left:310.1px;top:2.2px">20</span>
<span class="rl" style="left:388.3px;top:2.2px">30</span>
<span class="rl" style="left:466.5px;top:2.2px">40</span>
<span class="rl" style="left:544.7px;top:2.2px">50</span>
<span class="rl" style="left:622.9px;top:2.2px">60</span>
<span class="rl" style="left:701.1px;top:2.2px">70</span>
<span class="rl" style="left:779.3px;top:2.2px">80</span>
<span class="rl" style="left:857.5px;top:2.2px">90</span>
<span class="rl" style="left:935.7px;top:2.2px">100</span>
<span class="rl" style="left:1013.9px;top:2.2px">110</span>
<span class="rl" style="left:-8.7px;top:572.2px;transform:rotate(-90deg);font-size:9.2px;letter-spacing:-.2px">-10</span>
<span class="rl" style="left:-8.7px;top:494.0px;transform:rotate(-90deg);font-size:9.2px;letter-spacing:-.2px">0</span>
<span class="rl" style="left:-8.7px;top:415.8px;transform:rotate(-90deg);font-size:9.2px;letter-spacing:-.2px">10</span>
<span class="rl" style="left:-8.7px;top:337.6px;transform:rotate(-90deg);font-size:9.2px;letter-spacing:-.2px">20</span>
<span class="rl" style="left:-8.7px;top:259.4px;transform:rotate(-90deg);font-size:9.2px;letter-spacing:-.2px">30</span>
<span class="rl" style="left:-8.7px;top:181.2px;transform:rotate(-90deg);font-size:9.2px;letter-spacing:-.2px">40</span>
<span class="rl" style="left:-8.7px;top:103.0px;transform:rotate(-90deg);font-size:9.2px;letter-spacing:-.2px">50</span>
<span class="rl" style="left:-8.7px;top:24.8px;transform:rotate(-90deg);font-size:9.2px;letter-spacing:-.2px">60</span>
<div style="left:1066px;top:23px;width:17px;height:577px;background:#fafafa;border-left:1px solid #e6e6e6"></div>
<div style="left:1071.1px;top:171.3px;width:7.8px;height:279.1px;border-radius:3.9px;background:#7f7f7f"></div>
<div style="left:23px;top:600px;width:1043px;height:16px;background:#fafafa;border-top:1px solid #e6e6e6"></div>
<div style="left:129.1px;top:605px;width:775.6px;height:7.9px;border-radius:3.95px;background:#7f7f7f"></div>
<div style="left:1011px;top:600px;width:72px;height:16px;background:#ececec"></div>
<span style="left:1030.3px;top:600.5px;font-size:13.2px;line-height:16px;color:#111;white-space:nowrap">10 &lt; 100</span>
</div>
<div id="canvas">
<svg style="left:0;top:0" width="1043" height="577" viewBox="95 155 1043 577">
<path d="M240.5 155 V732 M95 631.0 H1138" stroke="#1a1a1a" stroke-width="1.3"/>
<path d="M1022.5 155 V732" stroke="#1a1a1a" stroke-width="1.3"/>
<g fill="#585858"><rect x="161.8" y="708.7" width="1" height="1"/><rect x="161.8" y="630.5" width="1" height="1"/><rect x="161.8" y="552.3" width="1" height="1"/><rect x="161.8" y="474.1" width="1" height="1"/><rect x="161.8" y="395.9" width="1" height="1"/><rect x="161.8" y="317.7" width="1" height="1"/><rect x="161.8" y="239.5" width="1" height="1"/><rect x="161.8" y="161.3" width="1" height="1"/><rect x="240.0" y="708.7" width="1" height="1"/><rect x="240.0" y="630.5" width="1" height="1"/><rect x="240.0" y="552.3" width="1" height="1"/><rect x="240.0" y="474.1" width="1" height="1"/><rect x="240.0" y="395.9" width="1" height="1"/><rect x="240.0" y="317.7" width="1" height="1"/><rect x="240.0" y="239.5" width="1" height="1"/><rect x="240.0" y="161.3" width="1" height="1"/><rect x="318.2" y="708.7" width="1" height="1"/><rect x="318.2" y="630.5" width="1" height="1"/><rect x="318.2" y="552.3" width="1" height="1"/><rect x="318.2" y="474.1" width="1" height="1"/><rect x="318.2" y="395.9" width="1" height="1"/><rect x="318.2" y="317.7" width="1" height="1"/><rect x="318.2" y="239.5" width="1" height="1"/><rect x="318.2" y="161.3" width="1" height="1"/><rect x="396.4" y="708.7" width="1" height="1"/><rect x="396.4" y="630.5" width="1" height="1"/><rect x="396.4" y="552.3" width="1" height="1"/><rect x="396.4" y="474.1" width="1" height="1"/><rect x="396.4" y="395.9" width="1" height="1"/><rect x="396.4" y="317.7" width="1" height="1"/><rect x="396.4" y="239.5" width="1" height="1"/><rect x="396.4" y="161.3" width="1" height="1"/><rect x="474.6" y="708.7" width="1" height="1"/><rect x="474.6" y="630.5" width="1" height="1"/><rect x="474.6" y="552.3" width="1" height="1"/><rect x="474.6" y="474.1" width="1" height="1"/><rect x="474.6" y="395.9" width="1" height="1"/><rect x="474.6" y="317.7" width="1" height="1"/><rect x="474.6" y="239.5" width="1" height="1"/><rect x="474.6" y="161.3" width="1" height="1"/><rect x="552.8" y="708.7" width="1" height="1"/><rect x="552.8" y="630.5" width="1" height="1"/><rect x="552.8" y="552.3" width="1" height="1"/><rect x="552.8" y="474.1" width="1" height="1"/><rect x="552.8" y="395.9" width="1" height="1"/><rect x="552.8" y="317.7" width="1" height="1"/><rect x="552.8" y="239.5" width="1" height="1"/><rect x="552.8" y="161.3" width="1" height="1"/><rect x="631.0" y="708.7" width="1" height="1"/><rect x="631.0" y="630.5" width="1" height="1"/><rect x="631.0" y="552.3" width="1" height="1"/><rect x="631.0" y="474.1" width="1" height="1"/><rect x="631.0" y="395.9" width="1" height="1"/><rect x="631.0" y="317.7" width="1" height="1"/><rect x="631.0" y="239.5" width="1" height="1"/><rect x="631.0" y="161.3" width="1" height="1"/><rect x="709.2" y="708.7" width="1" height="1"/><rect x="709.2" y="630.5" width="1" height="1"/><rect x="709.2" y="552.3" width="1" height="1"/><rect x="709.2" y="474.1" width="1" height="1"/><rect x="709.2" y="395.9" width="1" height="1"/><rect x="709.2" y="317.7" width="1" height="1"/><rect x="709.2" y="239.5" width="1" height="1"/><rect x="709.2" y="161.3" width="1" height="1"/><rect x="787.4" y="708.7" width="1" height="1"/><rect x="787.4" y="630.5" width="1" height="1"/><rect x="787.4" y="552.3" width="1" height="1"/><rect x="787.4" y="474.1" width="1" height="1"/><rect x="787.4" y="395.9" width="1" height="1"/><rect x="787.4" y="317.7" width="1" height="1"/><rect x="787.4" y="239.5" width="1" height="1"/><rect x="787.4" y="161.3" width="1" height="1"/><rect x="865.6" y="708.7" width="1" height="1"/><rect x="865.6" y="630.5" width="1" height="1"/><rect x="865.6" y="552.3" width="1" height="1"/><rect x="865.6" y="474.1" width="1" height="1"/><rect x="865.6" y="395.9" width="1" height="1"/><rect x="865.6" y="317.7" width="1" height="1"/><rect x="865.6" y="239.5" width="1" height="1"/><rect x="865.6" y="161.3" width="1" height="1"/><rect x="943.8" y="708.7" width="1" height="1"/><rect x="943.8" y="630.5" width="1" height="1"/><rect x="943.8" y="552.3" width="1" height="1"/><rect x="943.8" y="474.1" width="1" height="1"/><rect x="943.8" y="395.9" width="1" height="1"/><rect x="943.8" y="317.7" width="1" height="1"/><rect x="943.8" y="239.5" width="1" height="1"/><rect x="943.8" y="161.3" width="1" height="1"/><rect x="1022.0" y="708.7" width="1" height="1"/><rect x="1022.0" y="630.5" width="1" height="1"/><rect x="1022.0" y="552.3" width="1" height="1"/><rect x="1022.0" y="474.1" width="1" height="1"/><rect x="1022.0" y="395.9" width="1" height="1"/><rect x="1022.0" y="317.7" width="1" height="1"/><rect x="1022.0" y="239.5" width="1" height="1"/><rect x="1022.0" y="161.3" width="1" height="1"/><rect x="1100.2" y="708.7" width="1" height="1"/><rect x="1100.2" y="630.5" width="1" height="1"/><rect x="1100.2" y="552.3" width="1" height="1"/><rect x="1100.2" y="474.1" width="1" height="1"/><rect x="1100.2" y="395.9" width="1" height="1"/><rect x="1100.2" y="317.7" width="1" height="1"/><rect x="1100.2" y="239.5" width="1" height="1"/><rect x="1100.2" y="161.3" width="1" height="1"/></g>
<g stroke="#8e0000" stroke-width="1" fill="none"><path d="M220.6 631.0 H261 M240.5 611 V651"/><circle cx="240.5" cy="631.0" r="4.6"/></g>
<rect x="475.1" y="255.6" width="297.2" height="375.4" fill="none" stroke="#fff" stroke-width="1.6"/>
<g stroke="#00ffff" stroke-width="1.1" fill="none"><path d="M371.3 533.2 H423.9 M371.3 631.0 H423.9 M381.5 533.2 V631.0"/></g><path d="M381.5 533.2 l-3.7 19.8 h7.4 Z M381.5 631.0 l-3.7 -19.8 h7.4 Z" fill="#00ffff"/><text transform="translate(376.6 602.4) rotate(-90)" x="-4.5 8.3 21.4 25.2" y="0" font-family="DejaVu Sans,sans-serif" font-weight="200" font-size="27" fill="#00ffff" stroke="#00ffff" stroke-width=".35">12.5</text>
<g stroke="#00ffff" stroke-width="1.1" fill="none"><path d="M823.9 464.4 H876.2 M823.9 631.0 H876.2 M866.0 464.4 V631.0"/></g><path d="M866.0 464.4 l-3.7 19.8 h7.4 Z M866.0 631.0 l-3.7 -19.8 h7.4 Z" fill="#00ffff"/><text transform="translate(861.4 567.8) rotate(-90)" x="-1.9 10.4 21.4 26.9" y="0" font-family="DejaVu Sans,sans-serif" font-weight="200" font-size="27" fill="#00ffff" stroke="#00ffff" stroke-width=".35">21.3</text>
</svg>
</div>
<div id="cmd" style="left:72px;top:748px;width:1083px;height:50px;background:#ececec">
<div style="left:0;top:0.5px;width:1083px;height:22px;background:#fff;border-top:1px solid #c2c2c2;border-bottom:1px solid #dadada;border-left:1px solid #d4d4d4"></div>
<span style="left:5.3px;top:2.5px;font-size:13.3px;line-height:16px;color:#0808d4;white-space:nowrap"><i>Commande:</i> snapdistance</span>
<span class="lbl" style="left:1.3px;top:29.5px">Premier point :</span>
<div style="left:92px;top:28px;width:963px;height:18px;background:#fff"></div>
<div style="left:1055px;top:24px;width:26px;height:26px;border:1px solid #b4b4b4;border-left-color:#c4c4c4;background:linear-gradient(#e6e6e6,#f7f7f7)"></div>
<div style="left:1061px;top:32px;width:14px;height:10px;border:1px solid #222;border-top:3px solid #111;background:#efefef"></div>
</div>
<div style="left:1154px;top:108px;width:1px;height:690px;background:#c6c6c6"></div><div style="left:1155px;top:108px;width:1px;height:690px;background:#b2b2b2"></div>
<div id="rightpanel">
<!-- inside: x = pageX-1155, y = pageY-108 -->
<div style="left:1px;top:0;width:299px;height:23px;background:linear-gradient(#eeeeee,#dedede)"></div>
<span style="left:1px;top:2.7px;width:333px;text-align:center;font-size:11.8px;line-height:16px;color:#111;white-space:nowrap">Liste des calques</span>
<div class="pbtn" style="left:0px"></div><div class="pbtn" style="left:60px"></div><div class="pbtn" style="left:120px"></div><div class="pbtn" style="left:180px"></div><div class="pbtn" style="left:240px"></div>
<div style="left:1px;top:48px;width:299px;height:642px;background:#fff;border-right:1px solid #c0c0c0"></div>
<span class="lrow" style="left:28px;top:51.7px">0</span>
<span class="lrow" style="left:28px;top:71.7px">Cotations</span>
<span class="lrow" style="left:28px;top:91.7px">Defpoints</span>
<span class="lrow" style="left:28px;top:111.7px">Invisible</span>
<span class="lrow" style="left:28px;top:131.7px">Visible</span>
<svg style="left:0;top:0" width="300" height="690" viewBox="1155 108 300 690">
<defs>
<g id="eye" transform="scale(.94 1)"><path d="M-7.4 0.3 C-5 -4.6 5 -4.6 7.4 0.3 C5 5 -5 5 -7.4 0.3 Z" fill="#fff" stroke="#000" stroke-width="1.5"/><path d="M-7.6 -0.4 C-4.5 -5.6 4.5 -5.6 7.6 -0.4" fill="none" stroke="#000" stroke-width="2.4"/><circle cx="0" cy=".4" r="3.4" fill="#000"/><circle cx="-1" cy="-.8" r="1" fill="#fff"/></g>
<g id="lock"><path d="M-3.6 -1 V-4 C-3.6 -8.6 3.6 -8.6 3.6 -4 V-1" fill="none" stroke="#bdbdbd" stroke-width="1.5"/><rect x="-5" y="-1.4" width="10" height="7.8" rx=".8" fill="#bdbdbd"/></g>
<g id="pen"><g transform="rotate(-44.4)"><path d="M0 0 L3.2 -1.45 L14.2 -1.45 L14.2 1.45 L3.2 1.45 Z" fill="#dd9a2c" stroke="#9a6a20" stroke-width=".4"/><path d="M3.2 -.4 H14.2" stroke="#f4c65a" stroke-width=".8"/><path d="M0 0 L3.2 -1.45 V1.45 Z" fill="#ecd9b0" stroke="#7a5a30" stroke-width=".3"/><path d="M0 0 L1.4 -.65 V.65 Z" fill="#3a2a10"/><rect x="14.2" y="-1.5" width="3" height="3" rx=".8" fill="#ea2020"/></g></g>
</defs>
<circle cx="1164" cy="118" r="6.9" fill="#6b6b6b"/><path d="M1161 115 L1167 121 M1167 115 L1161 121" stroke="#fff" stroke-width="2.2" stroke-linecap="round"/>
<circle cx="1182" cy="118" r="6.9" fill="#6b6b6b"/><rect x="1180.6" y="114.6" width="5" height="4" fill="none" stroke="#fff" stroke-width="1"/><rect x="1178.4" y="117" width="5" height="4" fill="#6b6b6b" stroke="#fff" stroke-width="1"/>
<use href="#eye" x="1185" y="143"/><use href="#eye" x="1245" y="143" opacity=".33"/>
<path d="M1305 137 V149 M1299 143 H1311" stroke="#a80000" stroke-width="3.5"/><path d="M1305 137.6 V148.4 M1299.6 143 H1310.4" stroke="#f00" stroke-width="2.3"/>
<path d="M1359 143 H1371" stroke="#a80000" stroke-width="3.5"/><path d="M1359.6 143 H1370.4" stroke="#f00" stroke-width="2.3"/>
<g transform="translate(1417.9 149.8) scale(1.15)"><use href="#pen"/></g>
<g stroke="#000" stroke-width="1"><rect x="1161.5" y="163.5" width="15" height="8" fill="#fff"/><rect x="1161.5" y="183.5" width="15" height="8" fill="#0ff"/><rect x="1161.5" y="203.5" width="15" height="8" fill="#fff"/><rect x="1161.5" y="223.5" width="15" height="8" fill="#000"/><rect x="1161.5" y="243.5" width="15" height="8" fill="#000"/></g>
<use href="#eye" x="1423.2" y="167"/><use href="#eye" x="1423.2" y="187"/><use href="#eye" x="1423.2" y="207"/><use href="#eye" x="1423.2" y="227"/><use href="#eye" x="1423.2" y="247"/>
<use href="#lock" x="1444.8" y="167.6"/><use href="#lock" x="1444.8" y="187.6"/><use href="#lock" x="1444.8" y="207.6"/><use href="#lock" x="1444.8" y="227.6"/><use href="#lock" x="1444.8" y="247.6"/>
<g transform="translate(1394.6 233.4) scale(1.06)"><use href="#pen"/></g>
</svg>
</div>
<div id="righttb">
<!-- inside: x = pageX-1455, y = pageY-108 -->
<div class="hdots" style="left:7px;top:8px;width:26px"></div>
<div class="pressed" style="left:1.5px;top:12.5px;width:43px;height:42px"></div>
<div class="pressed" style="left:1.5px;top:309px;width:43px;height:43px"></div>
<div class="hsep" style="left:3px;top:153.5px;width:41px"></div>
<div class="hsep" style="left:3px;top:301.5px;width:41px"></div>
<svg style="left:0;top:0" width="45" height="690" viewBox="1455 108 45 690">
<defs><g id="win"><rect x=".5" y=".5" width="27" height="27" fill="#fff" stroke="#1a1a1a" stroke-width="1"/><rect x="1" y="1" width="26" height="4" fill="#000"/><rect x="1.6" y="1.4" width="2.8" height="2.8" fill="#fff"/></g></defs>
<use href="#win" x="1463" y="127"/>
<g transform="translate(1477 143)"><path d="M-6.5 -2.5 L1.5 -5.5 V5.5 L-6.5 8 Z" fill="#aaa" stroke="#555" stroke-width=".6"/><path d="M-4.5 -3.5 L3.5 -6.5 V4.5 L-4.5 7.2 Z" fill="#ccc" stroke="#555" stroke-width=".6"/><path d="M-2 -4.4 L6.4 -7.4 V3.6 L-2 6.4 Z" fill="#fff" stroke="#444" stroke-width=".7"/><path d="M0 3.6 L4.6 -4 L4.2 2.4 Z" fill="none" stroke="#e22" stroke-width=".8"/></g>
<use href="#win" x="1463" y="174.3"/>
<rect x="1470" y="184.6" width="10.6" height="8" fill="#f5ecc4" stroke="#6a6a5a" stroke-width=".7"/><circle cx="1478.8" cy="191.4" r="4.3" fill="#f5ecc4" fill-opacity=".85" stroke="#6a6a5a" stroke-width=".7"/>
<use href="#win" x="1463" y="220.3"/>
<rect x="1468.4" y="230.2" width="17" height="11.4" rx="2.4" fill="#f4f4f2" stroke="#c6d2ea" stroke-width=".9"/>
<use href="#win" x="1463" y="276"/>
<g fill="#000"><rect x="1466" y="283.6" width="4.2" height="3.2"/><rect x="1466" y="289.6" width="4.2" height="3.2"/><rect x="1466" y="295.6" width="4.2" height="3.2"/></g>
<g fill="#fff" stroke="#333" stroke-width=".6"><rect x="1472.8" y="283.8" width="14" height="2.8"/><rect x="1472.8" y="289.8" width="14" height="2.8"/><rect x="1472.8" y="295.8" width="14" height="2.8"/></g>
<use href="#win" x="1463" y="321.8"/>
<path d="M1469.6 331.4 Q1477 329 1484.4 331.4 L1478.6 337 V344.6 L1475.6 343.4 V337 Z" fill="#b9b9b9" stroke="#555" stroke-width=".7"/><ellipse cx="1477" cy="331.2" rx="7.4" ry="1.5" fill="#8a8a8a" stroke="#555" stroke-width=".5"/>
<use href="#win" x="1463" y="367.8"/>
<path d="M1465.6 383.6 H1486.4" stroke="#f2a0a0" stroke-width=".8" stroke-dasharray="1.5 1"/><path d="M1468.8 376.6 L1473 379.6 V387.6 L1468.8 390.6 Z" fill="#fff" stroke="#333" stroke-width=".7"/><rect x="1473" y="379.6" width="5" height="8" fill="#ddd" stroke="#555" stroke-width=".5"/><rect x="1478" y="380" width="6.4" height="7.2" rx="1.4" fill="#8e8e8e" stroke="#666" stroke-width=".5"/>
<use href="#win" x="1463" y="423.8"/>
<g stroke="#8a8a8a" stroke-width=".8"><path d="M1465.4 433 H1476 M1465.4 436.2 H1475 M1465.4 439.4 H1478 M1465.4 442.6 H1477"/></g><path d="M1463.5 446.4 H1490.5" stroke="#222" stroke-width=".7"/><path d="M1466 449.2 H1468.4 M1472 449.2 H1488" stroke="#555" stroke-width=".9"/>
<use href="#win" x="1463" y="471"/>
<rect x="1470.4" y="480.6" width="13.2" height="14.4" rx="1" fill="#c98a3a" stroke="#8f5f22" stroke-width=".5"/><rect x="1472" y="482.4" width="10" height="11.4" fill="#f0f0f0"/><rect x="1474.2" y="479.2" width="5.6" height="2.8" rx=".8" fill="#9a9a92"/><path d="M1473.4 485.6 H1480.6 M1473.4 487.6 H1480.6 M1473.4 489.6 H1479" stroke="#bdbdbd" stroke-width=".7"/>
</svg>
</div>
<div id="status">
<!-- inside: y = pageY-798 -->
<div style="left:0;top:0;width:1500px;height:1px;background:#e6e6e6"></div>
<span style="left:2px;top:8.1px">-14.2018,57.0839</span>
<span style="left:2px;top:28.1px">@-14.2018,57.0839</span>
<div style="left:253px;top:4px;width:1px;height:42px;background:#7a7a7a"></div>
<span style="left:256.5px;top:8.1px">58.824&lt;104°</span>
<span style="left:256.5px;top:28.1px">@58.824&lt;104°</span>
<div style="left:506.2px;top:20.7px;width:6px;height:6px;border-radius:3px;background:#c9c9c9"></div>
<div style="left:939.5px;top:20.7px;width:6px;height:6px;border-radius:3px;background:#cfcfcf"></div>
<div style="left:1269.2px;top:20.7px;width:6px;height:6px;border-radius:3px;background:#c9c9c9"></div>
<span style="left:638px;top:18.2px;">Premier point</span>
<span style="left:754px;top:18.2px;">Annuler</span>
<span style="left:949px;top:18.2px;">Aucune des entités sélectionnées.</span>
<svg style="left:0;top:0" width="1500" height="46" viewBox="0 798 1500 46">
<path d="M717 817 C717 809 720.5 806 726 806 C731.5 806 735 809 735 817 V826 C735 832 731.5 835.4 726 835.4 C720.5 835.4 717 832 717 826 Z" fill="#fff" stroke="#333" stroke-width=".9"/>
<path d="M717 820.4 Q726 817.6 735 820.4" fill="none" stroke="#333" stroke-width="1.2"/><path d="M726 806 V819" stroke="#333" stroke-width=".8"/><rect x="724.6" y="808.4" width="2.8" height="6.8" rx="1.4" fill="#fff" stroke="#333" stroke-width=".8"/>
</svg>
</div>
<!-- overlays: click highlight + mouse cursor -->
<div style="left:939.5px;top:49.5px;width:78px;height:78px;border-radius:39px;background:radial-gradient(circle closest-side,rgba(255,255,255,.17) 0,rgba(255,255,255,.17) 82%,rgba(115,148,185,.3) 85%,rgba(115,148,185,.5) 89%,rgba(115,148,185,.38) 92%,rgba(115,148,185,.5) 95%,rgba(115,148,185,.3) 98%,rgba(115,148,185,0) 100%)"></div>
<svg style="left:970px;top:80px" width="40" height="44" viewBox="970 80 40 44">
<path d="M979.5 88 V110.4 L984.6 106.2 L989.4 115.2 L993.6 113.6 L988.8 105 L994.6 104.4 Z" fill="#fff" stroke="#000" stroke-width="1.5" stroke-linejoin="round"/>
</svg>
</div>
</body></html>
